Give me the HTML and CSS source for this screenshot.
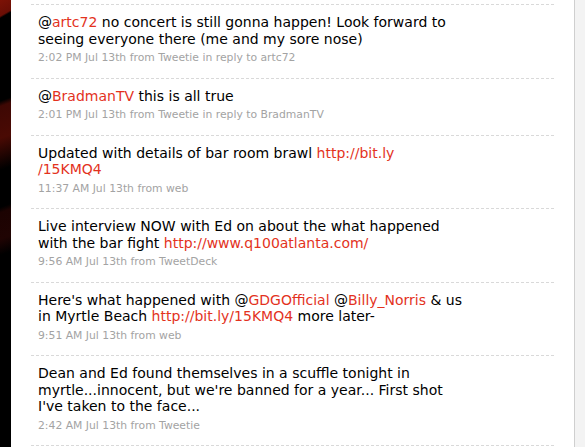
FILE: index.html
```html
<!DOCTYPE html>
<html>
<head>
<meta charset="utf-8">
<link rel="stylesheet" href="styles.css">
</head>
<body>
<div class="page">
  <div class="backdrop"></div>
  <div class="panel">
    <ol class="timeline">
      <li class="status">
        <p class="text">@<a class="link">artc72</a> no concert is still gonna happen! Look forward to<br>seeing everyone there (me and my sore nose)</p>
        <p class="meta">2:02 PM Jul 13th from Tweetie in reply to artc72</p>
      </li>
      <li class="status">
        <p class="text">@<a class="link">BradmanTV</a> this is all true</p>
        <p class="meta">2:01 PM Jul 13th from Tweetie in reply to BradmanTV</p>
      </li>
      <li class="status">
        <p class="text">Updated with details of bar room brawl <a class="link">http://bit.ly<br>/15KMQ4</a></p>
        <p class="meta">11:37 AM Jul 13th from web</p>
      </li>
      <li class="status">
        <p class="text">Live interview NOW with Ed on about the what happened<br>with the bar fight <a class="link">http://www.q100atlanta.com/</a></p>
        <p class="meta">9:56 AM Jul 13th from TweetDeck</p>
      </li>
      <li class="status">
        <p class="text">Here's what happened with @<a class="link">GDGOfficial</a> @<a class="link">Billy_Norris</a> &amp; us<br>in Myrtle Beach <a class="link">http://bit.ly/15KMQ4</a> more later-</p>
        <p class="meta">9:51 AM Jul 13th from web</p>
      </li>
      <li class="status">
        <p class="text">Dean and Ed found themselves in a scuffle tonight in<br>myrtle...innocent, but we're banned for a year... First shot<br>I've taken to the face...</p>
        <p class="meta">2:42 AM Jul 13th from Tweetie</p>
      </li>
      <li class="status"></li>
    </ol>
  </div>
  <div class="sidebar"></div>
</div>
</body>
</html>
```

FILE: styles.css
```css
html, body {
  margin: 0;
  padding: 0;
  background: #000;
}
.page {
  display: flex;
  width: 585px;
  height: 447px;
  overflow: hidden;
}
.backdrop {
  width: 11px;
  flex: none;
  background:
    linear-gradient(150deg, #7d1206 0px, #6a0e05 14px, transparent 16px),
    linear-gradient(160deg, transparent 95px, #3e0804 100px, #4a0a04 130px, transparent 160px),
    linear-gradient(160deg, transparent 195px, #1c0302 200px, #200403 225px, transparent 240px),
    #000;
}
.panel {
  width: 563px;
  flex: none;
  background: #fff;
  border-right: 1px solid #cfcfcf;
}
.sidebar {
  flex: 1;
  background: #f3f3f3;
}
.timeline {
  list-style: none;
  margin: 4px 20px 0;
  padding: 0;
}
.status {
  border-top: 1px dashed #d9d9d9;
  padding: 9px 7px 12.5px;
}
.text {
  margin: 0;
  font-family: "DejaVu Sans", sans-serif;
  font-size: 14px;
  line-height: 16.5px;
  color: #000;
}
.link {
  color: #e3321d;
}
.meta {
  margin: 4px 0 0;
  font-family: "DejaVu Sans", sans-serif;
  font-size: 10.8px;
  line-height: 14px;
  color: #a3a3a3;
}
```
